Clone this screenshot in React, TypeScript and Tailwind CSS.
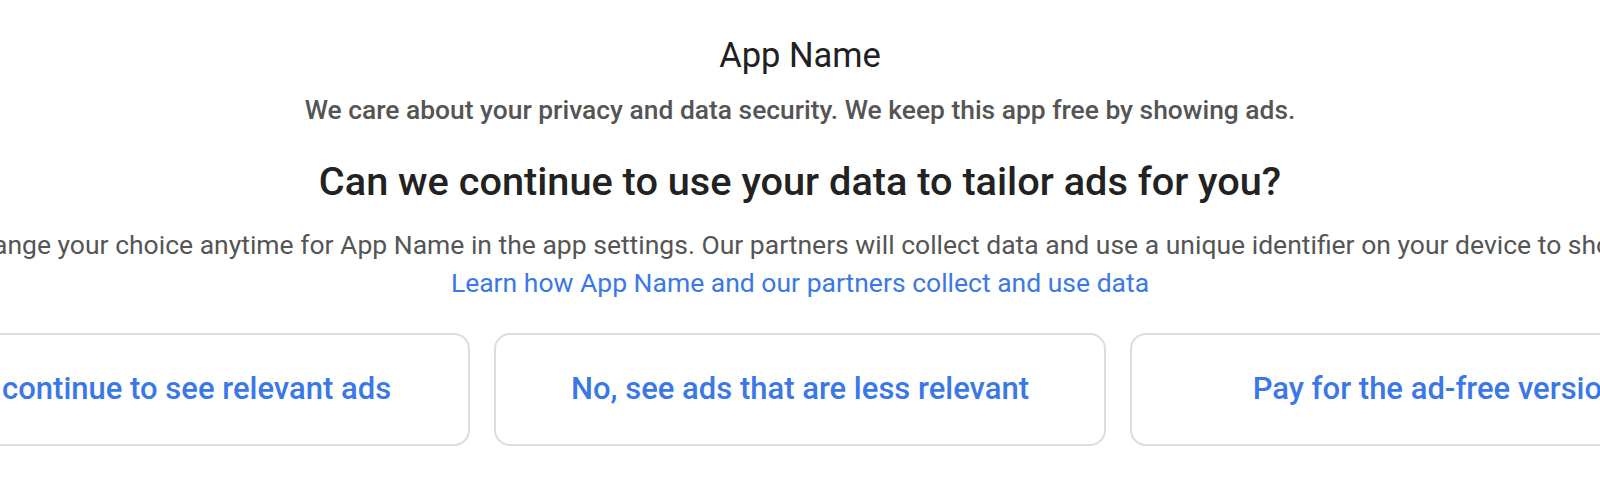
export default function App() {
  const options = [
    'Yes, continue to see relevant ads',
    'No, see ads that are less relevant',
    'Pay for the ad-free version',
  ];

  return (
    <div className="h-[480px] w-full overflow-hidden bg-white font-['Roboto',sans-serif]">
      <div className="flex flex-col items-center pt-[35px]">
        <h1 className="text-[34.5px] leading-[40px] text-[#202124]">App Name</h1>
        <p className="mt-[19px] text-[26.4px] leading-[32px] font-medium text-[#555555] whitespace-nowrap">
          We care about your privacy and data security. We keep this app free by showing ads.
        </p>
        <h2 className="mt-[32px] text-[39.7px] leading-[48px] font-medium text-[#222222] whitespace-nowrap">
          Can we continue to use your data to tailor ads for you?
        </h2>
        <p className="mt-[21px] text-[26.5px] leading-[36px] text-[#555555] whitespace-nowrap">
          You can change your choice anytime for App Name in the app settings. Our partners will collect data and use a unique identifier on your device to show you ads.
        </p>
        <a className="mt-[2px] text-[26.5px] leading-[36px] text-[#3b78e7] whitespace-nowrap">
          Learn how App Name and our partners collect and use data
        </a>
        <div className="mt-[32px] flex gap-[24px]">
          {options.map((label) => (
            <button
              key={label}
              className="flex h-[113px] w-[612px] shrink-0 items-center justify-center rounded-[16px] border-2 border-[#dadce0] bg-white text-[31px] font-medium text-[#3b78e7] whitespace-nowrap"
            >
              {label}
            </button>
          ))}
        </div>
      </div>
    </div>
  );
}
